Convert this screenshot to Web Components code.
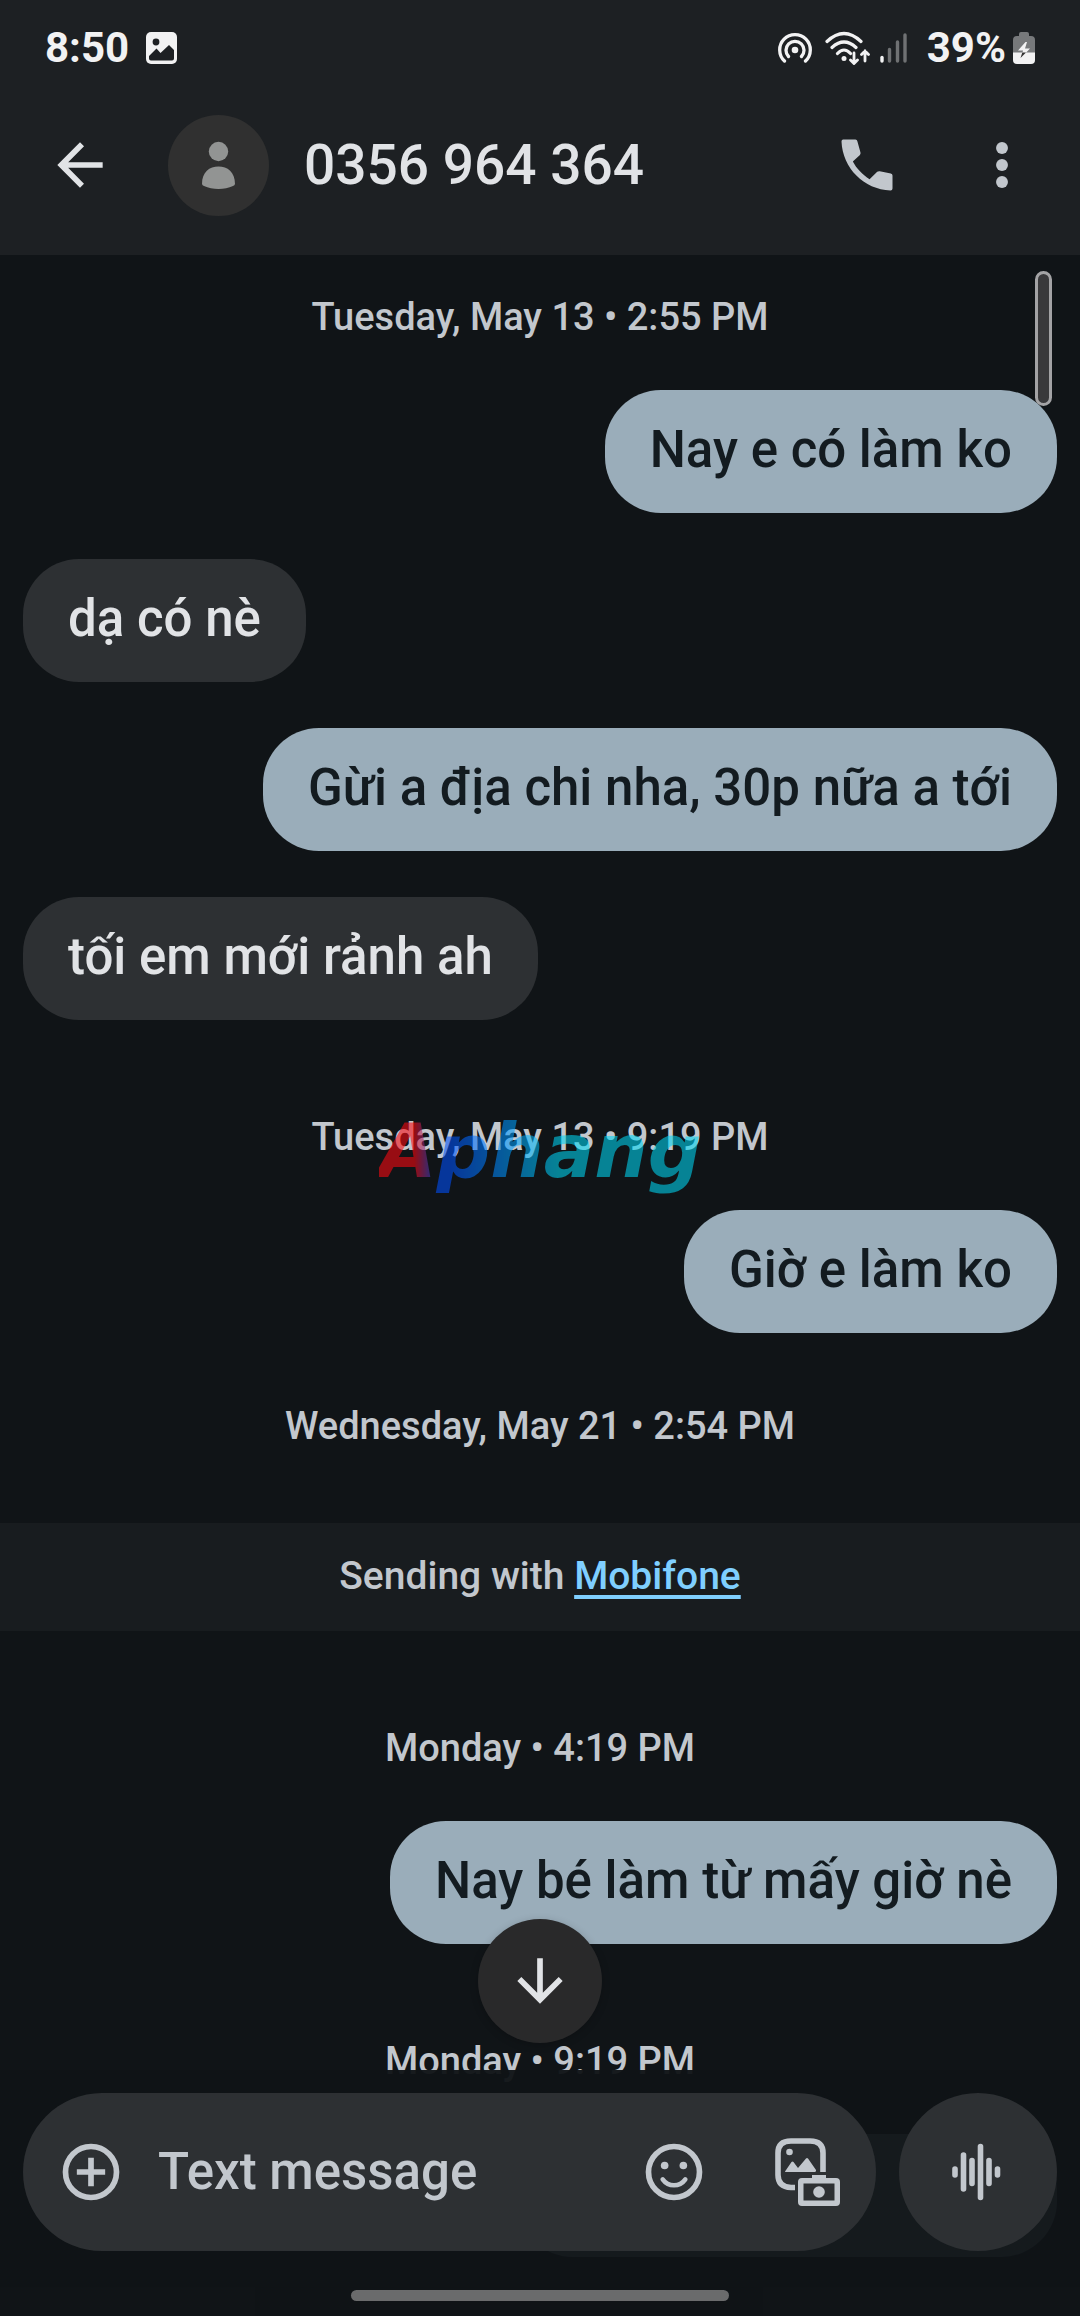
<!DOCTYPE html>
<html lang="vi">
<head>
<meta charset="utf-8">
<meta name="viewport" content="width=device-width, initial-scale=1">
<title>Messages</title>
<style>
  :root {
    --surface: #101417;
    --bar: #1d2023;
    --raised: #2d3033;
    --sent: #9aadba;
    --text: #e1e3e6;
    --muted: #c2c7cd;
    --link: #7fcfff;
  }
  body {
    margin: 0;
    background: var(--surface);
    color: var(--text);
    font-family: Roboto, sans-serif;
    font-weight: 500;
  }
</style>
</head>
<body>
<chat-app>
  <status-bar slot="top" time="8:50" battery="39%"></status-bar>
  <chat-header slot="top">0356 964 364</chat-header>

  <date-line>Tuesday, May 13 • 2:55 PM</date-line>
  <chat-bubble sent>Nay e có làm ko</chat-bubble>
  <chat-bubble>dạ có nè</chat-bubble>
  <chat-bubble sent>Gừi a địa chi nha, 30p nữa a tới</chat-bubble>
  <chat-bubble>tối em mới rảnh ah</chat-bubble>
  <date-line spaced>Tuesday, May 13 • 9:19 PM</date-line>
  <chat-bubble sent>Giờ e làm ko</chat-bubble>
  <date-line loose>Wednesday, May 21 • 2:54 PM</date-line>
  <carrier-note carrier="Mobifone">Sending with</carrier-note>
  <date-line spaced>Monday • 4:19 PM</date-line>
  <chat-bubble sent>Nay bé làm từ mấy giờ nè</chat-bubble>
  <date-line spaced>Monday • 9:19 PM</date-line>
  <chat-bubble sent blank></chat-bubble>

  <scroll-down slot="float"></scroll-down>
  <message-composer slot="bottom"></message-composer>
  <brand-mark slot="mark">Aphang</brand-mark>
</chat-app>

<script>
const define = (name, html) => {
  const tpl = document.createElement('template');
  tpl.innerHTML = html;
  customElements.define(name, class extends HTMLElement {
    constructor() {
      super();
      this.attachShadow({ mode: 'open' }).append(tpl.content.cloneNode(true));
    }
    connectedCallback() {
      this.shadowRoot.querySelectorAll('[data-attr]').forEach(n => {
        n.textContent = this.getAttribute(n.dataset.attr);
      });
    }
  });
};

const button = `
  button { display: grid; place-items: center; padding: 0; border: 0; background: none; color: inherit; cursor: pointer; }
  svg { display: block; fill: currentColor; }`;

define('chat-app', `
  <style>
    :host { display: flex; flex-direction: column; height: 100vh; position: relative; overflow: hidden; }
    header { flex: none; background: var(--bar); }
    main { flex: 1; min-height: 0; overflow: hidden; display: flex; flex-direction: column; gap: 46px; padding-top: 35px; box-sizing: border-box; }
    .thumb { position: absolute; top: 271px; right: 28px; width: 11px; height: 129px; border: 3px solid #a3a3a5; border-radius: 9px; background: #39393b; }
    footer { position: absolute; left: 0; right: 0; bottom: 0; }
    .float { position: absolute; left: 0; right: 0; bottom: 273px; display: flex; justify-content: center; }
    .mark { position: absolute; inset: 0; display: grid; place-items: center; pointer-events: none; }
  </style>
  <header><slot name="top"></slot></header>
  <main><slot></slot></main>
  <div class="thumb"></div>
  <footer><slot name="bottom"></slot></footer>
  <div class="float"><slot name="float"></slot></div>
  <div class="mark"><slot name="mark"></slot></div>`);

define('status-bar', `
  <style>
    :host { display: flex; justify-content: space-between; align-items: center; height: 96px; padding: 0 45px; color: #f2f2f3; font-size: 42px; line-height: 48px; font-weight: 700; }
    div { display: flex; align-items: center; }
    .left { gap: 17px; }
    svg { display: block; }
    .wifi { margin: 0 10px 0 13px; }
    .level { margin: 0 7px 0 20px; }
  </style>
  <div class="left">
    <span data-attr="time"></span>
    <svg width="31" height="32" viewBox="0 0 31 32"><rect width="31" height="32" rx="5" fill="#f2f2f3"/><circle cx="10" cy="10" r="3.4" fill="#1d2023"/><path d="M3 24l7.500-7.500 4 4.500L23 13l5 5v8.500q0 2-2 2H5q-2 0-2-2z" fill="#1d2023"/></svg>
  </div>
  <div>
    <svg width="34" height="32" viewBox="0 0 34 32" fill="none" stroke="#f2f2f3" stroke-width="3.300" stroke-linecap="round"><path d="M6.500 29a15.300 15.300 0 1 1 21 0M10.500 24.500a9 9 0 1 1 13 0"/><circle cx="17" cy="18" r="3.300" fill="#f2f2f3" stroke="none"/></svg>
    <svg class="wifi" width="45" height="34" viewBox="0 0 45 34" fill="none" stroke="#f2f2f3" stroke-width="3.200" stroke-linecap="round"><path d="M2 10.500Q19 -5.500 36 10.500M7 16.500Q19 5.500 31 16.500M12.500 22.500Q19 15.500 25.500 22.500"/><circle cx="19" cy="27.500" r="2.500" fill="#f2f2f3" stroke="none"/><path stroke-width="2.800" d="M29 22v10M25.500 29l3.500 3.500 3.500-3.500M40 30V20M36.500 23.500L40 20l3.500 3.500"/></svg>
    <svg width="27" height="30" viewBox="0 0 27 30" stroke-width="3.400" stroke-linecap="round"><path stroke="#f2f2f3" d="M2 24.500v3.500"/><path stroke="#6f7173" d="M9.500 16.500V28M17.500 9V28M25 2V28"/></svg>
    <span class="level" data-attr="battery"></span>
    <svg width="22" height="32" viewBox="0 0 22 32"><path d="M6 4V2q0-2 2-2h6q2 0 2 2v2h2q4 0 4 4v14H0V8q0-4 4-4z" fill="#77797b"/><path d="M0 20.500h22V28q0 4-4 4H4q-4 0-4-4z" fill="#f2f2f3"/><path d="M12.500 10L5 18.500h5L8 26l9-9.500h-5l2-6.500z" fill="#f2f2f3"/><path d="M9.300 20.500L7.500 26l5.500-5.500z" fill="#333"/></svg>
  </div>`);

define('chat-header', `
  <style>${button}
    :host { display: flex; align-items: center; height: 138px; padding: 0 44px 21px 46px; }
    .avatar { flex: none; width: 101px; height: 101px; margin: 0 35px 0 54px; border-radius: 50%; background: #303030; color: #929493; }
    h1 { flex: 1; margin: 0; font-size: 55px; line-height: 68px; font-weight: 500; }
    .actions { display: flex; gap: 67px; color: var(--muted); }
  </style>
  <button aria-label="Back"><svg width="68" height="68" viewBox="0 0 24 24"><path d="M20 11H7.830l5.590-5.590L12 4l-8 8 8 8 1.410-1.410L7.830 13H20z"/></svg></button>
  <svg class="avatar" viewBox="0 0 101 101"><circle cx="50.500" cy="36.500" r="9.700"/><path d="M34 69C34 57 41.500 51.500 50.500 51.500S67 57 67 69q-.3 1.500-2 2-6.500 3-14.500 3T36 71q-1.700-.5-2-2z"/></svg>
  <h1><slot></slot></h1>
  <div class="actions">
    <button aria-label="Call"><svg width="68" height="68" viewBox="0 0 24 24"><path d="M3.600 3H7.900q.6 0 .7.6L9.700 7.600q.1.500-.2.900L7 10.800C8.300 13.300 10.500 15.500 12.900 17L15.600 14.400q.4-.3.900-.2L20.400 15q.6.100.6.700V20.300q0 .7-.7.7C10.900 20.600 3.400 13.100 3 3.700q0-.7.6-.7z"/></svg></button>
    <button aria-label="More options"><svg width="68" height="68" viewBox="0 0 24 24"><circle cx="12" cy="6" r="2.100"/><circle cx="12" cy="12" r="2.100"/><circle cx="12" cy="18" r="2.100"/></svg></button>
  </div>`);

define('date-line', `
  <style>
    :host { display: block; flex: none; text-align: center; color: var(--muted); font-size: 38px; line-height: 54px; }
    :host([spaced]) { margin-top: 44px; }
    :host([loose]) { margin-top: 20px; }
  </style>
  <slot></slot>`);

define('chat-bubble', `
  <style>
    :host { display: block; flex: none; align-self: flex-start; max-width: 80%; box-sizing: border-box; margin: 0 23px; padding: 28px 45px 32px; border-radius: 56px; background: var(--raised); color: var(--text); font-size: 51px; line-height: 63px; }
    :host([sent]) { align-self: flex-end; background: var(--sent); color: #131b20; }
    :host([blank]) { width: 50%; height: 123px; }
  </style>
  <slot></slot>`);

define('carrier-note', `
  <style>
    :host { display: block; flex: none; margin-top: 24px; padding: 26px 0 28px; background: #181c1f; text-align: center; color: var(--muted); font-size: 39px; line-height: 54px; }
    a { color: var(--link); text-decoration: underline; text-decoration-thickness: 4px; text-underline-offset: 6px; text-decoration-skip-ink: none; }
  </style>
  <slot></slot> <a href="#" data-attr="carrier"></a>`);

define('scroll-down', `
  <style>${button}
    button { width: 124px; height: 124px; border-radius: 50%; background: #29292a; color: var(--text); box-shadow: 0 2px 8px #0003; }
  </style>
  <button aria-label="Scroll to latest"><svg width="68" height="68" viewBox="0 0 24 24"><path d="M20 12l-1.410-1.410L13 16.170V4h-2v12.170l-5.580-5.590L4 12l8 8z"/></svg></button>`);

define('message-composer', `
  <style>${button}
    :host { display: block; padding: 23px 23px 15px; background: rgba(16, 20, 23, .96); color: var(--muted); }
    form { display: flex; gap: 23px; }
    .field { flex: 1; min-width: 0; display: flex; align-items: center; height: 158px; box-sizing: border-box; padding: 0 34px; border-radius: 79px; background: var(--raised); }
    input { flex: 1; min-width: 0; margin: 0 0 0 33px; padding: 0 0 2px; border: 0; outline: 0; background: none; color: var(--text); font: inherit; font-size: 51px; line-height: 63px; }
    input::placeholder { color: var(--muted); opacity: 1; }
    .media { margin-left: 66px; }
    .voice { flex: none; width: 158px; height: 158px; border-radius: 50%; background: var(--raised); }
    .home { width: 35vw; height: 11px; margin: 39px auto 0; border-radius: 6px; background: #6a6b6c; }
    .line { fill: none; stroke: currentColor; }
  </style>
  <form>
    <div class="field">
      <button type="button" aria-label="Add"><svg width="68" height="68" viewBox="0 0 24 24"><path class="line" stroke-width="2" d="M12 7v10M7 12h10"/><circle class="line" stroke-width="2" cx="12" cy="12" r="9"/></svg></button>
      <input type="text" placeholder="Text message" aria-label="Text message">
      <button type="button" aria-label="Emoji"><svg width="68" height="68" viewBox="0 0 24 24"><circle class="line" stroke-width="2" cx="12" cy="12" r="9"/><circle cx="8.700" cy="9.700" r="1.350"/><circle cx="15.300" cy="9.700" r="1.350"/><path class="line" stroke-width="1.600" stroke-linecap="round" d="M8 14.600Q9.500 16.700 12 16.700T16 14.600"/></svg></button>
      <button class="media" type="button" aria-label="Gallery and camera"><svg width="68" height="68" viewBox="0 0 68 68"><path class="line" stroke-width="5.600" d="M21 49.500H17Q4 49 4 37V15Q4 3 17 3H36Q49 3 49 15V34"/><circle cx="15.500" cy="14" r="3.300"/><path d="M11 33.500l6.500-9.500q1-1 2 0l4.500 6 8-9.500q1-1 2 0L42 32q.5 1.500-1 2H12q-1 0-1-.5z"/><path fill-rule="evenodd" d="M38 40v-3h14v3h10q4 0 4 4v20q0 4-4 4H28q-4 0-4-4V44q0-4 4-4zM29.500 45.500v17h31v-17z"/><circle cx="45" cy="54" r="5.800"/></svg></button>
    </div>
    <button class="voice" type="button" aria-label="Record voice message"><svg width="68" height="68" viewBox="0 0 68 68"><path class="line" stroke-width="5.600" stroke-linecap="round" d="M11 31v6M19.500 17v34M28 22.500v23M36.500 8.500v51M45 22.500v23M53.500 31v6"/></svg></button>
  </form>
  <div class="home"></div>`);

define('brand-mark', `
  <style>
    :host { display: block; padding-bottom: 14px; font: italic 700 75px/90px "DejaVu Sans", sans-serif; opacity: .57; color: transparent; background: linear-gradient(90deg, #ff0810 0 11%, #0050ff 18% 22%, #0090ff 38%, #00d8f5 56%); background-clip: text; -webkit-background-clip: text; }
  </style>
  <slot></slot>`);
</script>
</body>
</html>
